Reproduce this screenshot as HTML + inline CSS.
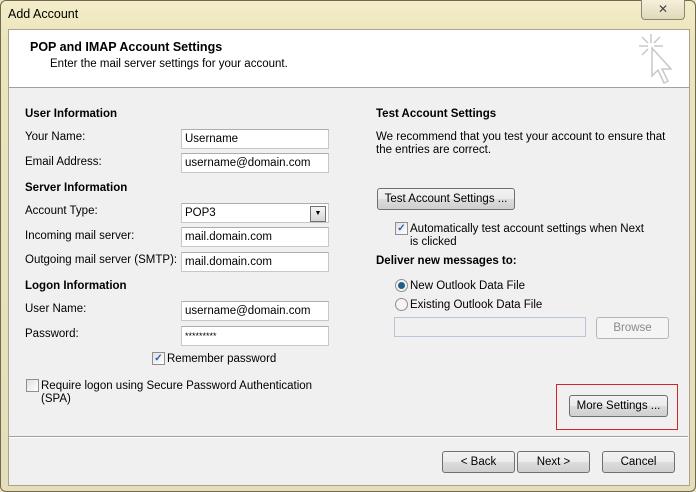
<!DOCTYPE html>
<html><head><style>
body{margin:0;width:696px;height:492px;background:#e9e3c4;font-family:"Liberation Sans",sans-serif;font-size:11.5px;color:#000;position:relative;overflow:hidden}
.a{position:absolute;white-space:nowrap;line-height:16px}
.frame{position:absolute;left:0;top:0;width:694px;height:490px;border:1px solid #6f6a55;border-radius:6px;background:linear-gradient(#f4edc8,#ece4bb 40px,#e6deb8)}
.inner{position:absolute;left:8px;top:29px;width:680px;height:455px;border:1px solid #a8a390;background:#f0f0f0}
.hdr{position:absolute;left:0;top:0;width:680px;height:57px;background:#fff;border-bottom:1px solid #a0a0a0}
.in{position:absolute;border:1px solid #c5c7cc;border-top-color:#abadb3;background:#fff;padding-left:3px;line-height:18px;box-sizing:border-box;height:20px;font-size:11.5px}
.b{font-weight:bold}
.btn{position:absolute;height:22px;box-sizing:border-box;border:1px solid #707070;border-radius:3px;background:linear-gradient(#f2f2f2,#ebebeb 50%,#dddddd 50%,#cfcfcf);text-align:center;line-height:20px}
.cb{position:absolute;width:11px;height:11px;border:1px solid #8f8f8f;background:linear-gradient(135deg,#e0e0e0,#fff);font-size:10px;line-height:11px;text-align:center;color:#2a5aa8;font-weight:bold}
.rd{position:absolute;width:11px;height:11px;border:1px solid #8f8f8f;border-radius:50%;background:#f4f4f4}
</style></head><body>
<div class="frame"></div>
<div class="a" style="left:8px;top:6px;font-size:12.5px">Add Account</div>
<div class="a" style="left:641px;top:0;width:42px;height:19px;border:1px solid #8a8670;border-top:none;border-radius:0 0 4px 4px;background:linear-gradient(#f5f0dc,#e0d9bc);text-align:center;font-size:12px;line-height:18px;color:#444">✕</div>
<div class="inner">
<div class="hdr"></div>
</div>
<svg class="a" style="left:634px;top:33px" width="42" height="52" viewBox="0 0 42 52"><g stroke="#c8c8c8" stroke-width="1.5" fill="none"><path d="M17 1v9M5 13h9M20 13h9M8 4l6 6M26 4l-6 6M8 22l6-6"/><path d="M18 15v28l6-6 6 13 4-2-6-12h9z" fill="#fff"/></g></svg>
<div class="a b" style="left:30px;top:39px;font-size:12.5px">POP and IMAP Account Settings</div>
<div class="a" style="left:50px;top:56px">Enter the mail server settings for your account.</div>

<div class="a b" style="left:25px;top:106px">User Information</div>
<div class="a" style="left:25px;top:129px">Your Name:</div>
<div class="in" style="left:181px;top:129px;width:148px">Username</div>
<div class="a" style="left:25px;top:154px">Email Address:</div>
<div class="in" style="left:181px;top:153px;width:148px">username@domain.com</div>
<div class="a b" style="left:25px;top:180px">Server Information</div>
<div class="a" style="left:25px;top:203px">Account Type:</div>
<div class="in" style="left:181px;top:203px;width:148px">POP3<div style="position:absolute;right:2px;top:2px;width:14px;height:14px;border:1px solid #707070;background:linear-gradient(#f5f5f5,#d5d5d5);font-size:7px;text-align:center;line-height:14px">▼</div></div>
<div class="a" style="left:25px;top:228px">Incoming mail server:</div>
<div class="in" style="left:181px;top:227px;width:148px">mail.domain.com</div>
<div class="a" style="left:25px;top:252px">Outgoing mail server (SMTP):</div>
<div class="in" style="left:181px;top:252px;width:148px">mail.domain.com</div>
<div class="a b" style="left:25px;top:278px">Logon Information</div>
<div class="a" style="left:25px;top:301px">User Name:</div>
<div class="in" style="left:181px;top:301px;width:148px">username@domain.com</div>
<div class="a" style="left:25px;top:326px">Password:</div>
<div class="in" style="left:181px;top:326px;width:148px;font-size:9px">*********</div>
<div class="cb" style="left:152px;top:352px">✓</div>
<div class="a" style="left:167px;top:351px">Remember password</div>
<div class="cb" style="left:26px;top:379px"></div>
<div class="a" style="left:41px;top:378px">Require logon using Secure Password Authentication</div>
<div class="a" style="left:41px;top:391px">(SPA)</div>

<div class="a b" style="left:376px;top:106px">Test Account Settings</div>
<div class="a" style="left:376px;top:129px">We recommend that you test your account to ensure that</div>
<div class="a" style="left:376px;top:142px">the entries are correct.</div>
<div class="btn" style="left:377px;top:188px;width:138px">Test Account Settings ...</div>
<div class="cb" style="left:395px;top:222px">✓</div>
<div class="a" style="left:410px;top:221px">Automatically test account settings when Next</div>
<div class="a" style="left:410px;top:234px">is clicked</div>
<div class="a b" style="left:376px;top:253px">Deliver new messages to:</div>
<div class="rd" style="left:395px;top:279px"><div style="position:absolute;left:2px;top:2px;width:7px;height:7px;border-radius:50%;background:#1f5f8a"></div></div>
<div class="a" style="left:410px;top:278px">New Outlook Data File</div>
<div class="rd" style="left:395px;top:298px"></div>
<div class="a" style="left:410px;top:297px">Existing Outlook Data File</div>
<div class="a" style="left:394px;top:317px;width:190px;height:18px;border:1px solid #b9c6d6;background:#f0f0f0"></div>
<div class="btn" style="left:596px;top:317px;width:73px;border-color:#b5b5b5;background:#f4f4f4;color:#8a8a8a">Browse</div>
<div class="a" style="left:556px;top:384px;width:120px;height:44px;border:1px solid #d0262b"></div>
<div class="btn" style="left:569px;top:395px;width:99px">More Settings ...</div>
<div class="a" style="left:9px;top:436px;width:679px;height:0;border-top:1px solid #a0a0a0;border-bottom:1px solid #fff"></div>
<div class="btn" style="left:442px;top:451px;width:73px">&lt; Back</div>
<div class="btn" style="left:517px;top:451px;width:73px">Next &gt;</div>
<div class="btn" style="left:602px;top:451px;width:73px">Cancel</div>
</body></html>
